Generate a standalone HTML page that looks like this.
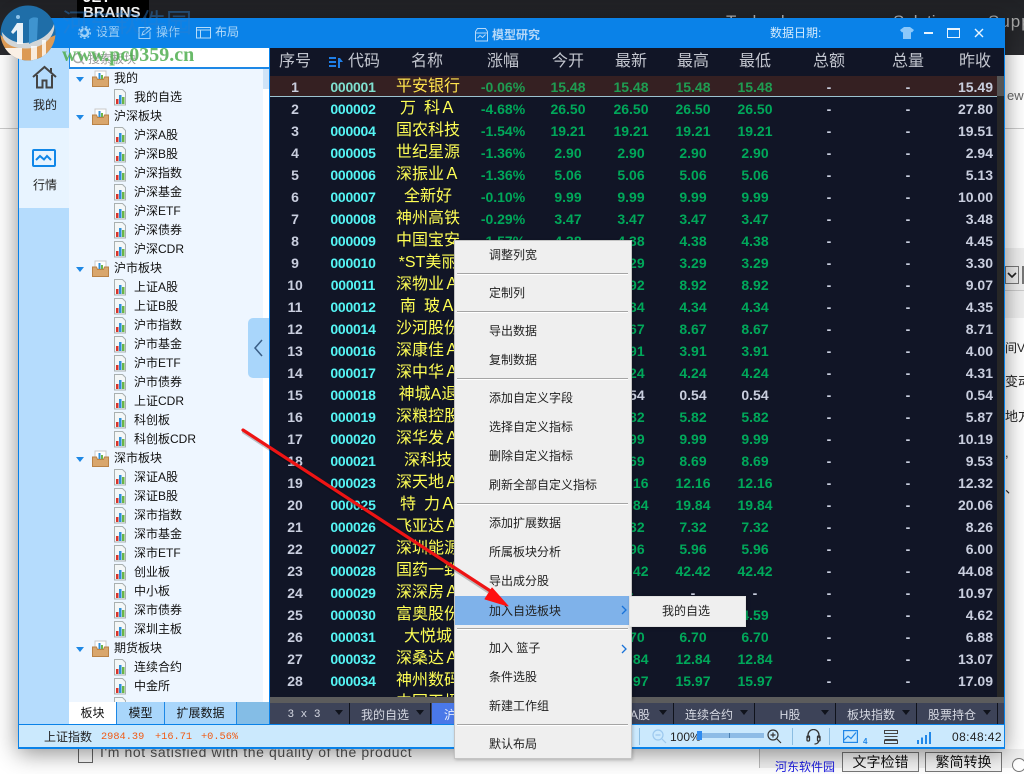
<!DOCTYPE html>
<html><head><meta charset="utf-8"><style>
*{box-sizing:border-box}
html,body{margin:0;padding:0}
body{width:1024px;height:768px;overflow:hidden;position:relative;background:#fff;font-family:"Liberation Sans","WenQuanYi Zen Hei","Noto Sans CJK SC",sans-serif}
#win{position:absolute;left:18px;top:18px;width:987px;height:731px;background:#0a82e8;box-shadow:0 4px 22px rgba(0,0,0,.45)}
.t{position:absolute;white-space:nowrap;line-height:1}
/* tree */
.n{position:absolute;left:114px;font-size:12px;line-height:19px;height:19px;color:#111;white-space:nowrap}
.f{left:134px}
.ic{position:absolute;width:14px;height:17px}
.ar{position:absolute;left:76px;width:0;height:0;border-left:4px solid transparent;border-right:4px solid transparent;border-top:5px solid #1e88e5}
/* table */
#tb{position:absolute;left:270px;top:48px;width:734px;height:655px;background:#111526;overflow:hidden}
.h{position:absolute;top:0;height:28px;line-height:28px;font-size:16px;color:#c3c6cf;width:80px;text-align:center;white-space:nowrap}
.r{position:absolute;left:0;width:734px;height:22px;line-height:22px;font-size:14px;font-weight:bold;white-space:nowrap}
.r span{position:absolute;top:0;text-align:center;color:#00a85a}
.s{left:0;width:50px;color:#c9cede!important}
.c{left:60px;width:46px;color:#55f5f5!important;letter-spacing:-.25px}
.m{left:118px;width:80px;color:#ffff55!important;font-size:16px;font-weight:normal}
.g{left:193px;width:80px}
.o{left:258px;width:80px}.l{left:321px;width:80px}.u{left:383px;width:80px}.w{left:445px;width:80px}
.d1{left:519px;width:80px;color:#c9cede!important}.d2{left:598px;width:80px;color:#c9cede!important}
.p{left:645px;width:78px;text-align:right!important;color:#c9cede!important}
.mi{position:absolute;left:489px;font-size:12px;color:#222;line-height:16px;white-space:nowrap}
.sp{position:absolute;left:457px;width:171px;height:2px;background:linear-gradient(#a5a5a5 1px,#fff 1px)}
.bt{position:absolute;top:703px;height:21px;width:80px;padding-right:11px;background:#3d4358;color:#d5d8e2;font-size:12px;line-height:24px;text-align:center;border-right:1px solid #10131c}
.bt i{position:absolute;right:6px;top:7px;width:0;height:0;border-left:4px solid transparent;border-right:4px solid transparent;border-top:5px solid #10131c}
</style></head><body>
<svg width="0" height="0" style="position:absolute"><defs>
<symbol id="fl" viewBox="0 0 14 17"><path d="M1.500.5h8l3 3v12.500h-11z" fill="#f4f7f7" stroke="#a9b0b0"/><rect x="3" y="10" width="2.500" height="5" fill="#d9342b"/><rect x="6" y="6" width="2.500" height="9" fill="#2f8fd8"/><rect x="9" y="8" width="2.500" height="7" fill="#69b548"/></symbol>
<symbol id="fd" viewBox="0 0 17 17"><path d="M3 1h11v8H3z" fill="#fff" stroke="#c9c9c9"/><rect x="6.500" y="3" width="2" height="6" fill="#2f8fd8"/><rect x="9" y="5" width="2" height="4" fill="#6cb649"/><path d="M.5 7h4l1 2.500h6l1-2.500h4v9.500H.5z" fill="#d9a66c" stroke="#b98246"/></symbol>
</defs></svg>

<!-- page behind -->
<div style="position:absolute;left:0;top:0;width:1024px;height:55px;background:linear-gradient(#202125,#2a2b2f)"></div>
<div style="position:absolute;left:77px;top:0;width:72px;height:18px;background:#000;color:#fff;font:bold 15px/15px 'Liberation Sans',sans-serif;overflow:hidden"><div style="position:absolute;left:6px;top:-10px">JET</div><div style="position:absolute;left:6px;top:5px">BRAINS</div></div>
<div class="t" style="left:726px;top:13px;font-size:17px;color:#bbb">Technology</div>
<div class="t" style="left:893px;top:13px;font-size:17px;color:#bbb">Solutions</div>
<div class="t" style="left:988px;top:13px;font-size:17px;color:#aaa;letter-spacing:1px">Supp</div>
<div style="position:absolute;left:0;top:128px;width:18px;height:1px;background:#ccc"></div>
<div style="position:absolute;left:1005px;top:128px;width:19px;height:1px;background:#ccc"></div>
<div class="t" style="left:1007px;top:89px;font-size:13px;color:#666">ew</div>
<div style="position:absolute;left:1005px;top:248px;width:19px;height:42px;background:#f0f0f0"></div>
<div style="position:absolute;left:1005px;top:266px;width:14px;height:18px;background:#eee;border:1px solid #777"></div>
<svg style="position:absolute;left:1006px;top:270px" width="12" height="10" viewBox="0 0 12 10" fill="none" stroke="#222" stroke-width="1.600"><path d="M2 3l4 4 4-4"/></svg>
<div style="position:absolute;left:1022px;top:266px;width:2px;height:18px;background:#777"></div>
<div style="position:absolute;left:1005px;top:290px;width:19px;height:28px;background:#f1f1f1;border-top:1px solid #ccc"></div>
<div class="t" style="left:1005px;top:342px;font-size:12px;color:#222">间VB</div>
<div class="t" style="left:1005px;top:375px;font-size:13px;color:#222">变动</div>
<div class="t" style="left:1005px;top:410px;font-size:13px;color:#222">地方</div>
<div class="t" style="left:1005px;top:446px;font-size:13px;color:#222">, </div>
<div class="t" style="left:1005px;top:482px;font-size:13px;color:#222">、</div>
<div class="t" style="left:100px;top:745px;font-size:14px;color:#555;letter-spacing:.6px">I'm not satisfied with the quality of the product</div>
<div style="position:absolute;left:78px;top:748px;width:15px;height:15px;border:1px solid #666;background:#fff"></div>
<div style="position:absolute;left:759px;top:749px;width:265px;height:19px;background:#f0f0f0;border-left:1px solid #bbb"></div>
<div class="t" style="left:775px;top:761px;font-size:12px;color:#1a1ae0">河东软件园</div>
<div class="t" style="left:842px;top:752px;width:77px;height:20px;border:1px solid #777;background:#f4f4f4;font-size:14px;text-align:center;line-height:18px;color:#111">文字检错</div>
<div class="t" style="left:925px;top:752px;width:77px;height:20px;border:1px solid #777;background:#f4f4f4;font-size:14px;text-align:center;line-height:18px;color:#111">繁简转换</div>
<div style="position:absolute;left:1012px;top:758px;width:14px;height:14px;border:1px solid #777;border-radius:50%;background:#fff"></div>

<!-- window -->
<div id="win"></div>
<div class="t" style="left:96px;top:26px;font-size:12px;color:#9fd0f7">设置</div>
<svg style="position:absolute;left:78px;top:26px" width="13" height="13" viewBox="0 0 13 13"><circle cx="6.500" cy="6.500" r="3.500" fill="none" stroke="#9fd0f7" stroke-width="2.500"/><circle cx="6.500" cy="6.500" r="5.800" fill="none" stroke="#9fd0f7" stroke-width="1.500" stroke-dasharray="2 2"/></svg>
<div class="t" style="left:156px;top:26px;font-size:12px;color:#9fd0f7">操作</div>
<svg style="position:absolute;left:138px;top:26px" width="14" height="13" viewBox="0 0 14 13" fill="none" stroke="#9fd0f7"><path d="M10.500 1.500h-9.500v11h11v-7"/><path d="M4 9l1-3 6-5 2 2-6 5z"/></svg>
<div class="t" style="left:215px;top:26px;font-size:12px;color:#b6dcf9">布局</div>
<svg style="position:absolute;left:196px;top:27px" width="15" height="12" viewBox="0 0 15 12" fill="none" stroke="#b6dcf9"><rect x=".5" y=".5" width="14" height="10.500"/><path d="M.5 3h14M4.500 3v8"/></svg>
<svg style="position:absolute;left:475px;top:28px" width="13" height="14" viewBox="0 0 13 14" fill="none" stroke="#b6d8f8"><path d="M2.500.5h8l2 3v9.500H.5V3.500z"/><path d="M.5 5h12M2.500 10l2.500-2.500 2.500 2 3-3"/></svg>
<div class="t" style="left:492px;top:29px;font-size:12px;font-weight:bold;color:#b6d8f8">模型研究</div>
<div class="t" style="left:770px;top:27px;font-size:12px;color:#d5ebfc">数据日期:</div>
<svg style="position:absolute;left:900px;top:27px" width="14" height="12" viewBox="0 0 14 12"><path d="M4 0h6l4 3-2 2.500-1-.5v7H3V5l-1 .5L0 3z" fill="#8cc8fa"/></svg>
<div style="position:absolute;left:924px;top:32px;width:9px;height:2px;background:#e8f4fe"></div>
<div style="position:absolute;left:947px;top:28px;width:13px;height:10px;border:1px solid #e8f4fe;border-top-width:2px"></div>
<svg style="position:absolute;left:974px;top:28px" width="10" height="10" viewBox="0 0 10 10" stroke="#e8f4fe" stroke-width="1.400"><path d="M1 1l8 8M9 1L1 9"/></svg>

<!-- sidebar -->
<div style="position:absolute;left:19px;top:48px;width:50px;height:676px;background:#b5dcfd"></div>
<div style="position:absolute;left:19px;top:128px;width:50px;height:80px;background:#e8f4ff"></div>
<svg style="position:absolute;left:32px;top:65px" width="25" height="24" viewBox="0 0 25 24" fill="none" stroke="#444" stroke-width="2"><path d="M1 12L12.500 2 24 12M5 10v12.500h5.500v-7h4v7H20V10M19 3v4"/></svg>
<div class="t" style="left:33px;top:99px;font-size:12px;color:#222">我的</div>
<svg style="position:absolute;left:32px;top:149px" width="24" height="19" viewBox="0 0 24 19" fill="none" stroke="#1187e8" stroke-width="2"><rect x="1" y="1" width="22" height="16" rx="1"/><path d="M4 11l4-4 4 3.500 3-3.500 4 4"/></svg>
<div class="t" style="left:33px;top:179px;font-size:12px;color:#222">行情</div>

<!-- tree -->
<div style="position:absolute;left:69px;top:48px;width:200px;height:654px;background:#eef6ff;overflow:hidden"></div>
<div style="position:absolute;left:69px;top:48px;width:200px;height:21px;background:#fff;border-left:1px solid #1d88e6;border-bottom:2px solid #1d88e6"></div>
<div class="t" style="left:88px;top:53px;font-size:12px;color:#9a9a9a">搜索板块</div>
<svg style="position:absolute;left:72px;top:52px" width="13" height="13" viewBox="0 0 13 13" fill="none" stroke="#aaa" stroke-width="1.500"><circle cx="6" cy="6" r="4.500"/><path d="M9 9l3 3"/></svg>
<div style="position:absolute;left:263px;top:69px;width:6px;height:633px;background:#fff"></div>
<div style="position:absolute;left:263px;top:69px;width:6px;height:20px;background:#cfe3f7"></div>

<i class="ar" style="top:77px"></i><svg class="ic" style="left:92px;top:70px;width:17px"><use href="#fd"/></svg><div class="n" style="top:69px">我的</div>
<svg class="ic" style="left:113px;top:89px"><use href="#fl"/></svg><div class="n f" style="top:88px">我的自选</div>
<i class="ar" style="top:115px"></i><svg class="ic" style="left:92px;top:108px;width:17px"><use href="#fd"/></svg><div class="n" style="top:107px">沪深板块</div>
<svg class="ic" style="left:113px;top:127px"><use href="#fl"/></svg><div class="n f" style="top:126px">沪深A股</div>
<svg class="ic" style="left:113px;top:146px"><use href="#fl"/></svg><div class="n f" style="top:145px">沪深B股</div>
<svg class="ic" style="left:113px;top:165px"><use href="#fl"/></svg><div class="n f" style="top:164px">沪深指数</div>
<svg class="ic" style="left:113px;top:184px"><use href="#fl"/></svg><div class="n f" style="top:183px">沪深基金</div>
<svg class="ic" style="left:113px;top:203px"><use href="#fl"/></svg><div class="n f" style="top:202px">沪深ETF</div>
<svg class="ic" style="left:113px;top:222px"><use href="#fl"/></svg><div class="n f" style="top:221px">沪深债券</div>
<svg class="ic" style="left:113px;top:241px"><use href="#fl"/></svg><div class="n f" style="top:240px">沪深CDR</div>
<i class="ar" style="top:267px"></i><svg class="ic" style="left:92px;top:260px;width:17px"><use href="#fd"/></svg><div class="n" style="top:259px">沪市板块</div>
<svg class="ic" style="left:113px;top:279px"><use href="#fl"/></svg><div class="n f" style="top:278px">上证A股</div>
<svg class="ic" style="left:113px;top:298px"><use href="#fl"/></svg><div class="n f" style="top:297px">上证B股</div>
<svg class="ic" style="left:113px;top:317px"><use href="#fl"/></svg><div class="n f" style="top:316px">沪市指数</div>
<svg class="ic" style="left:113px;top:336px"><use href="#fl"/></svg><div class="n f" style="top:335px">沪市基金</div>
<svg class="ic" style="left:113px;top:355px"><use href="#fl"/></svg><div class="n f" style="top:354px">沪市ETF</div>
<svg class="ic" style="left:113px;top:374px"><use href="#fl"/></svg><div class="n f" style="top:373px">沪市债券</div>
<svg class="ic" style="left:113px;top:393px"><use href="#fl"/></svg><div class="n f" style="top:392px">上证CDR</div>
<svg class="ic" style="left:113px;top:412px"><use href="#fl"/></svg><div class="n f" style="top:411px">科创板</div>
<svg class="ic" style="left:113px;top:431px"><use href="#fl"/></svg><div class="n f" style="top:430px">科创板CDR</div>
<i class="ar" style="top:457px"></i><svg class="ic" style="left:92px;top:450px;width:17px"><use href="#fd"/></svg><div class="n" style="top:449px">深市板块</div>
<svg class="ic" style="left:113px;top:469px"><use href="#fl"/></svg><div class="n f" style="top:468px">深证A股</div>
<svg class="ic" style="left:113px;top:488px"><use href="#fl"/></svg><div class="n f" style="top:487px">深证B股</div>
<svg class="ic" style="left:113px;top:507px"><use href="#fl"/></svg><div class="n f" style="top:506px">深市指数</div>
<svg class="ic" style="left:113px;top:526px"><use href="#fl"/></svg><div class="n f" style="top:525px">深市基金</div>
<svg class="ic" style="left:113px;top:545px"><use href="#fl"/></svg><div class="n f" style="top:544px">深市ETF</div>
<svg class="ic" style="left:113px;top:564px"><use href="#fl"/></svg><div class="n f" style="top:563px">创业板</div>
<svg class="ic" style="left:113px;top:583px"><use href="#fl"/></svg><div class="n f" style="top:582px">中小板</div>
<svg class="ic" style="left:113px;top:602px"><use href="#fl"/></svg><div class="n f" style="top:601px">深市债券</div>
<svg class="ic" style="left:113px;top:621px"><use href="#fl"/></svg><div class="n f" style="top:620px">深圳主板</div>
<i class="ar" style="top:647px"></i><svg class="ic" style="left:92px;top:640px;width:17px"><use href="#fd"/></svg><div class="n" style="top:639px">期货板块</div>
<svg class="ic" style="left:113px;top:659px"><use href="#fl"/></svg><div class="n f" style="top:658px">连续合约</div>
<svg class="ic" style="left:113px;top:678px"><use href="#fl"/></svg><div class="n f" style="top:677px">中金所</div>
<svg class="ic" style="left:113px;top:697px"><use href="#fl"/></svg>
<div style="position:absolute;left:248px;top:318px;width:21px;height:60px;background:#a9d6fb;border-radius:5px 0 0 5px"></div>
<svg style="position:absolute;left:252px;top:338px" width="12" height="20" viewBox="0 0 12 20" fill="none" stroke="#3a5e86" stroke-width="1.500"><path d="M10 2L3 10l7 8"/></svg>

<!-- left tabs -->
<div style="position:absolute;left:69px;top:702px;width:200px;height:22px;background:#84bde6"></div>
<div style="position:absolute;left:69px;top:702px;width:48px;height:22px;background:#fff;border-right:1px solid #1d88e6;text-align:center;font-size:12px;line-height:22px;color:#111">板块</div>
<div style="position:absolute;left:117px;top:702px;width:48px;height:22px;background:#a9d6fb;border-right:1px solid #1d88e6;text-align:center;font-size:12px;line-height:22px;color:#111">模型</div>
<div style="position:absolute;left:165px;top:702px;width:72px;height:22px;background:#a9d6fb;border-right:1px solid #1d88e6;text-align:center;font-size:12px;line-height:22px;color:#111">扩展数据</div>

<!-- table -->
<div id="tb">
<div class="h" style="left:-15px">序号</div><div class="h" style="left:54px">代码</div>
<svg style="position:absolute;left:59px;top:9px" width="14" height="11" viewBox="0 0 14 11" fill="#1f7fe8"><rect y="0" width="7" height="2"/><rect y="4" width="7" height="2"/><rect y="8" width="7" height="2"/><path d="M9 11V1h2l3 4h-3v6z"/></svg>
<div class="h" style="left:117px">名称</div><div class="h" style="left:193px">涨幅</div><div class="h" style="left:258px">今开</div><div class="h" style="left:321px">最新</div><div class="h" style="left:383px">最高</div><div class="h" style="left:445px">最低</div><div class="h" style="left:519px">总额</div><div class="h" style="left:598px">总量</div><div class="h" style="left:665px">昨收</div>
<div style="position:absolute;left:0;top:28px;width:727px;height:20px;background:#352022"></div>
<div style="position:absolute;left:0;top:48px;width:727px;height:1px;background:#9cc3d0"></div>
<div style="position:absolute;left:727px;top:28px;width:7px;height:627px;background:#262626"></div>
<div style="position:absolute;left:727px;top:28px;width:7px;height:20px;background:#555"></div>

<div class="r" style="top:28px"><span class="s">1</span><span class="c" style="color:#7fe0d0!important">000001</span><span class="m" style="color:#ffe34d!important">平安银行</span><span class="g" style="color:#1f9c52">-0.06%</span><span class="o" style="color:#1f9c52">15.48</span><span class="l" style="color:#1f9c52">15.48</span><span class="u" style="color:#1f9c52">15.48</span><span class="w" style="color:#1f9c52">15.48</span><span class="d1">-</span><span class="d2">-</span><span class="p">15.49</span></div>
<div class="r" style="top:50px"><span class="s">2</span><span class="c">000002</span><span class="m">万&ensp;科Ａ</span><span class="g">-4.68%</span><span class="o">26.50</span><span class="l">26.50</span><span class="u">26.50</span><span class="w">26.50</span><span class="d1">-</span><span class="d2">-</span><span class="p">27.80</span></div>
<div class="r" style="top:72px"><span class="s">3</span><span class="c">000004</span><span class="m">国农科技</span><span class="g">-1.54%</span><span class="o">19.21</span><span class="l">19.21</span><span class="u">19.21</span><span class="w">19.21</span><span class="d1">-</span><span class="d2">-</span><span class="p">19.51</span></div>
<div class="r" style="top:94px"><span class="s">4</span><span class="c">000005</span><span class="m">世纪星源</span><span class="g">-1.36%</span><span class="o">2.90</span><span class="l">2.90</span><span class="u">2.90</span><span class="w">2.90</span><span class="d1">-</span><span class="d2">-</span><span class="p">2.94</span></div>
<div class="r" style="top:116px"><span class="s">5</span><span class="c">000006</span><span class="m">深振业Ａ</span><span class="g">-1.36%</span><span class="o">5.06</span><span class="l">5.06</span><span class="u">5.06</span><span class="w">5.06</span><span class="d1">-</span><span class="d2">-</span><span class="p">5.13</span></div>
<div class="r" style="top:138px"><span class="s">6</span><span class="c">000007</span><span class="m">全新好</span><span class="g">-0.10%</span><span class="o">9.99</span><span class="l">9.99</span><span class="u">9.99</span><span class="w">9.99</span><span class="d1">-</span><span class="d2">-</span><span class="p">10.00</span></div>
<div class="r" style="top:160px"><span class="s">7</span><span class="c">000008</span><span class="m">神州高铁</span><span class="g">-0.29%</span><span class="o">3.47</span><span class="l">3.47</span><span class="u">3.47</span><span class="w">3.47</span><span class="d1">-</span><span class="d2">-</span><span class="p">3.48</span></div>
<div class="r" style="top:182px"><span class="s">8</span><span class="c">000009</span><span class="m">中国宝安</span><span class="g">-1.57%</span><span class="o">4.38</span><span class="l">4.38</span><span class="u">4.38</span><span class="w">4.38</span><span class="d1">-</span><span class="d2">-</span><span class="p">4.45</span></div>
<div class="r" style="top:204px"><span class="s">9</span><span class="c">000010</span><span class="m">*ST美丽</span><span class="g">-0.30%</span><span class="o">3.29</span><span class="l">3.29</span><span class="u">3.29</span><span class="w">3.29</span><span class="d1">-</span><span class="d2">-</span><span class="p">3.30</span></div>
<div class="r" style="top:226px"><span class="s">10</span><span class="c">000011</span><span class="m">深物业Ａ</span><span class="g">-1.65%</span><span class="o">8.92</span><span class="l">8.92</span><span class="u">8.92</span><span class="w">8.92</span><span class="d1">-</span><span class="d2">-</span><span class="p">9.07</span></div>
<div class="r" style="top:248px"><span class="s">11</span><span class="c">000012</span><span class="m">南&ensp;玻Ａ</span><span class="g">-0.23%</span><span class="o">4.34</span><span class="l">4.34</span><span class="u">4.34</span><span class="w">4.34</span><span class="d1">-</span><span class="d2">-</span><span class="p">4.35</span></div>
<div class="r" style="top:270px"><span class="s">12</span><span class="c">000014</span><span class="m">沙河股份</span><span class="g">-0.46%</span><span class="o">8.67</span><span class="l">8.67</span><span class="u">8.67</span><span class="w">8.67</span><span class="d1">-</span><span class="d2">-</span><span class="p">8.71</span></div>
<div class="r" style="top:292px"><span class="s">13</span><span class="c">000016</span><span class="m">深康佳Ａ</span><span class="g">-2.25%</span><span class="o">3.91</span><span class="l">3.91</span><span class="u">3.91</span><span class="w">3.91</span><span class="d1">-</span><span class="d2">-</span><span class="p">4.00</span></div>
<div class="r" style="top:314px"><span class="s">14</span><span class="c">000017</span><span class="m">深中华Ａ</span><span class="g">-1.62%</span><span class="o">4.24</span><span class="l">4.24</span><span class="u">4.24</span><span class="w">4.24</span><span class="d1">-</span><span class="d2">-</span><span class="p">4.31</span></div>
<div class="r" style="top:336px"><span class="s">15</span><span class="c">000018</span><span class="m">神城A退</span><span class="g" style="color:#c9cede">0.00%</span><span class="o" style="color:#c9cede">0.54</span><span class="l" style="color:#c9cede">0.54</span><span class="u" style="color:#c9cede">0.54</span><span class="w" style="color:#c9cede">0.54</span><span class="d1">-</span><span class="d2">-</span><span class="p">0.54</span></div>
<div class="r" style="top:358px"><span class="s">16</span><span class="c">000019</span><span class="m">深粮控股</span><span class="g">-0.85%</span><span class="o">5.82</span><span class="l">5.82</span><span class="u">5.82</span><span class="w">5.82</span><span class="d1">-</span><span class="d2">-</span><span class="p">5.87</span></div>
<div class="r" style="top:380px"><span class="s">17</span><span class="c">000020</span><span class="m">深华发Ａ</span><span class="g">-1.96%</span><span class="o">9.99</span><span class="l">9.99</span><span class="u">9.99</span><span class="w">9.99</span><span class="d1">-</span><span class="d2">-</span><span class="p">10.19</span></div>
<div class="r" style="top:402px"><span class="s">18</span><span class="c">000021</span><span class="m">深科技</span><span class="g">-8.81%</span><span class="o">8.69</span><span class="l">8.69</span><span class="u">8.69</span><span class="w">8.69</span><span class="d1">-</span><span class="d2">-</span><span class="p">9.53</span></div>
<div class="r" style="top:424px"><span class="s">19</span><span class="c">000023</span><span class="m">深天地Ａ</span><span class="g">-1.30%</span><span class="o">12.16</span><span class="l">12.16</span><span class="u">12.16</span><span class="w">12.16</span><span class="d1">-</span><span class="d2">-</span><span class="p">12.32</span></div>
<div class="r" style="top:446px"><span class="s">20</span><span class="c">000025</span><span class="m">特&ensp;力Ａ</span><span class="g">-1.10%</span><span class="o">19.84</span><span class="l">19.84</span><span class="u">19.84</span><span class="w">19.84</span><span class="d1">-</span><span class="d2">-</span><span class="p">20.06</span></div>
<div class="r" style="top:468px"><span class="s">21</span><span class="c">000026</span><span class="m">飞亚达Ａ</span><span class="g">-11.38%</span><span class="o">7.32</span><span class="l">7.32</span><span class="u">7.32</span><span class="w">7.32</span><span class="d1">-</span><span class="d2">-</span><span class="p">8.26</span></div>
<div class="r" style="top:490px"><span class="s">22</span><span class="c">000027</span><span class="m">深圳能源</span><span class="g">-0.67%</span><span class="o">5.96</span><span class="l">5.96</span><span class="u">5.96</span><span class="w">5.96</span><span class="d1">-</span><span class="d2">-</span><span class="p">6.00</span></div>
<div class="r" style="top:512px"><span class="s">23</span><span class="c">000028</span><span class="m">国药一致</span><span class="g">-3.77%</span><span class="o">42.42</span><span class="l">42.42</span><span class="u">42.42</span><span class="w">42.42</span><span class="d1">-</span><span class="d2">-</span><span class="p">44.08</span></div>
<div class="r" style="top:534px"><span class="s">24</span><span class="c">000029</span><span class="m">深深房Ａ</span><span class="g">-</span><span class="o">-</span><span class="l">-</span><span class="u" style="color:#c9cede">-</span><span class="w" style="color:#c9cede">-</span><span class="d1">-</span><span class="d2">-</span><span class="p">10.97</span></div>
<div class="r" style="top:556px"><span class="s">25</span><span class="c">000030</span><span class="m">富奥股份</span><span class="g">-0.65%</span><span class="o">4.59</span><span class="l">4.59</span><span class="u">4.59</span><span class="w">4.59</span><span class="d1">-</span><span class="d2">-</span><span class="p">4.62</span></div>
<div class="r" style="top:578px"><span class="s">26</span><span class="c">000031</span><span class="m">大悦城</span><span class="g">-2.61%</span><span class="o">6.70</span><span class="l">6.70</span><span class="u">6.70</span><span class="w">6.70</span><span class="d1">-</span><span class="d2">-</span><span class="p">6.88</span></div>
<div class="r" style="top:600px"><span class="s">27</span><span class="c">000032</span><span class="m">深桑达Ａ</span><span class="g">-1.76%</span><span class="o">12.84</span><span class="l">12.84</span><span class="u">12.84</span><span class="w">12.84</span><span class="d1">-</span><span class="d2">-</span><span class="p">13.07</span></div>
<div class="r" style="top:622px"><span class="s">28</span><span class="c">000034</span><span class="m">神州数码</span><span class="g">-6.55%</span><span class="o">15.97</span><span class="l">15.97</span><span class="u">15.97</span><span class="w">15.97</span><span class="d1">-</span><span class="d2">-</span><span class="p">17.09</span></div>
<div class="r" style="top:644px"><span class="m">中国天楹</span></div>
<div style="position:absolute;left:0;top:649px;width:734px;height:6px;background:#5c5c5c"></div>
</div>

<!-- bottom tabs -->
<div style="position:absolute;left:270px;top:703px;width:734px;height:21px;background:#3d4358"></div>
<div class="bt" style="left:270px;font-family:'Liberation Mono',monospace;font-size:11px">3 x 3<i></i></div>
<div class="bt" style="left:351px">我的自选<i></i></div>
<div class="bt" style="left:432px;background:#4a78e8;color:#e8eefc">沪深A股<i></i></div>
<div class="bt" style="left:594px">沪深A股<i></i></div>
<div class="bt" style="left:675px">连续合约<i></i></div>
<div class="bt" style="left:756px">H股<i></i></div>
<div class="bt" style="left:837px">板块指数<i></i></div>
<div class="bt" style="left:918px">股票持仓<i></i></div>

<!-- status -->
<div style="position:absolute;left:19px;top:725px;width:985px;height:22px;background:#cbe9fd"></div>
<div class="t" style="left:44px;top:731px;font-size:12px;color:#222">上证指数</div>
<div class="t" style="left:101px;top:731px;font:10.300px 'Liberation Mono',monospace;color:#f05a14">2984.39</div>
<div class="t" style="left:155px;top:731px;font:10.300px 'Liberation Mono',monospace;color:#f05a14">+16.71</div>
<div class="t" style="left:201px;top:731px;font:10.300px 'Liberation Mono',monospace;color:#f05a14">+0.56%</div>
<div style="position:absolute;left:639px;top:728px;width:1px;height:17px;background:#8abde2"></div>
<svg style="position:absolute;left:652px;top:729px" width="15" height="15" viewBox="0 0 15 15" fill="none" stroke="#9cc8ee" stroke-width="1.200"><circle cx="6" cy="6" r="5"/><path d="M3.500 6h5M10 10l4 4" /></svg>
<div class="t" style="left:670px;top:731px;font-size:12px;color:#222">100%</div>
<div style="position:absolute;left:697px;top:733px;width:67px;height:5px;background:#8ebce6"></div>
<div style="position:absolute;left:697px;top:731px;width:5px;height:9px;background:#2f8cf0"></div>
<div style="position:absolute;left:729px;top:733px;width:1px;height:5px;background:#4a7fb0"></div>
<svg style="position:absolute;left:767px;top:729px" width="15" height="15" viewBox="0 0 15 15" fill="none" stroke="#333" stroke-width="1.200"><circle cx="6" cy="6" r="5"/><path d="M3.500 6h5M6 3.500v5M10 10l4 4"/></svg>
<div style="position:absolute;left:792px;top:728px;width:1px;height:17px;background:#8abde2"></div>
<svg style="position:absolute;left:806px;top:729px" width="15" height="16" viewBox="0 0 15 16" fill="none" stroke="#333" stroke-width="1.300"><path d="M2 9V6a5.500 5.500 0 0 1 11 0v3"/><rect x="1" y="7" width="2.500" height="5" rx="1"/><rect x="11.500" y="7" width="2.500" height="5" rx="1"/><path d="M12.500 12c0 2-2 3-4 3"/></svg>
<div style="position:absolute;left:829px;top:728px;width:1px;height:17px;background:#8abde2"></div>
<svg style="position:absolute;left:843px;top:730px" width="15" height="13" viewBox="0 0 15 13" fill="none" stroke="#2187e8" stroke-width="1.200"><rect x=".6" y=".6" width="13.800" height="11.800"/><path d="M1 10l4-4 3 2.500 5-6"/></svg>
<div class="t" style="left:863px;top:738px;font-size:8px;font-weight:bold;color:#2187e8">4</div>
<svg style="position:absolute;left:884px;top:730px" width="14" height="14" viewBox="0 0 14 14" fill="none" stroke="#444"><rect x=".5" y=".5" width="13" height="3"/><path d="M.5 6.500h13M.5 9.500h13"/><rect x=".5" y="10.500" width="13" height="3"/></svg>
<svg style="position:absolute;left:917px;top:732px" width="15" height="12" viewBox="0 0 15 12" fill="#2187e8"><rect x="0" y="8" width="2" height="4"/><rect x="4" y="5.500" width="2" height="6.500"/><rect x="8" y="3" width="2" height="9"/><rect x="12" y="0" width="2" height="12"/></svg>
<div class="t" style="left:952px;top:731px;font-size:12px;color:#222;letter-spacing:.4px">08:48:42</div>

<!-- context menu -->
<div style="position:absolute;left:454px;top:240px;width:178px;height:519px;background:#efefef;border:1px solid #c4c4c4;box-shadow:1px 1px 3px rgba(0,0,0,.2)"></div>
<div class="mi" style="top:247px">调整列宽</div>
<div class="sp" style="top:273px"></div>
<div class="mi" style="top:285px">定制列</div>
<div class="sp" style="top:311px"></div>
<div class="mi" style="top:323px">导出数据</div>
<div class="mi" style="top:352px">复制数据</div>
<div class="sp" style="top:378px"></div>
<div class="mi" style="top:390px">添加自定义字段</div>
<div class="mi" style="top:419px">选择自定义指标</div>
<div class="mi" style="top:448px">删除自定义指标</div>
<div class="mi" style="top:477px">刷新全部自定义指标</div>
<div class="sp" style="top:503px"></div>
<div class="mi" style="top:515px">添加扩展数据</div>
<div class="mi" style="top:544px">所属板块分析</div>
<div class="mi" style="top:573px">导出成分股</div>
<div style="position:absolute;left:455px;top:596px;width:176px;height:29px;background:#7fb2ea"></div>
<div class="mi" style="top:603px">加入自选板块</div>
<svg style="position:absolute;left:621px;top:605px" width="6" height="10" viewBox="0 0 6 10" fill="none" stroke="#1a73d8" stroke-width="1.300"><path d="M1 1l4 4-4 4"/></svg>
<div class="sp" style="top:628px"></div>
<div class="mi" style="top:640px">加入 篮子</div>
<svg style="position:absolute;left:621px;top:644px" width="6" height="10" viewBox="0 0 6 10" fill="none" stroke="#1a73d8" stroke-width="1.300"><path d="M1 1l4 4-4 4"/></svg>
<div class="mi" style="top:669px">条件选股</div>
<div class="mi" style="top:698px">新建工作组</div>
<div class="sp" style="top:724px"></div>
<div class="mi" style="top:736px">默认布局</div>
<div style="position:absolute;left:629px;top:596px;width:117px;height:31px;background:#efefef;border:1px solid #e2e2e2;box-shadow:1px 1px 3px rgba(0,0,0,.25)"></div>
<div class="mi" style="left:662px;top:603px">我的自选</div>

<!-- arrow -->
<svg style="position:absolute;left:0;top:0;pointer-events:none" width="1024" height="768" viewBox="0 0 1024 768">
<path d="M244 432L497 597" stroke="#000" stroke-opacity=".22" stroke-width="4" stroke-linecap="round"/>
<path d="M243 430L495 594" stroke="#ee1414" stroke-width="3.200" stroke-linecap="round"/>
<path d="M508 606L492 588 485 599z" fill="#ff1010" stroke="#ff1010" stroke-linejoin="round"/>
</svg>

<!-- watermark -->
<svg style="position:absolute;left:0;top:4px" width="58" height="60" viewBox="0 0 58 60">
<defs><clipPath id="cc"><circle cx="28" cy="29" r="27.500"/></clipPath></defs>
<g clip-path="url(#cc)">
<rect width="58" height="60" fill="#1f6ea8"/>
<path d="M0 30C8 40 22 46 58 30V60H0z" fill="#dc9a55"/>
<path d="M2 28C2 42 18 46 32 44 46 42 56 30 54 20 50 32 36 39 24 39 14 39 6 34 2 28z" fill="#d2d6d8"/>
<path d="M0 44h22v16H0z" fill="#fff" opacity=".85"/>
<path d="M31 42h6v16h-6zM42 36h4v20h-4z" fill="#fff" opacity=".8"/>
<path d="M11 28l6-9h6v21h-6V26l-4 4z" fill="#fff" opacity=".9"/>
<path d="M29 40V16c2-3 6-3 9-2l-1 22z" fill="#3f94cf"/>
<circle cx="18" cy="13" r="2" fill="#8fc4ea"/>
</g>
</svg>
<div class="t" style="left:62px;top:10px;font-size:26px;color:#2a7fd0;opacity:.45">河东软件园</div>
<div class="t" style="left:62px;top:44px;font:bold 20px 'Liberation Serif',serif;color:#4fae4f;opacity:.85">www.pc0359.cn</div>
</body></html>
